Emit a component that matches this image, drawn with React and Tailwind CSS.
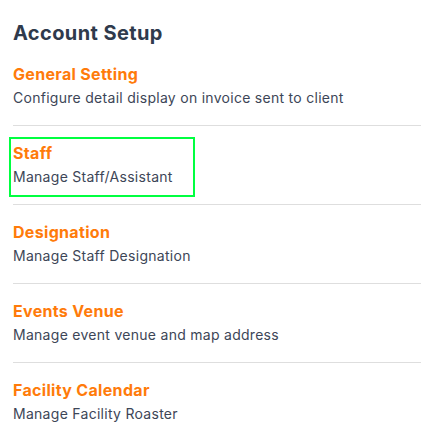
import React from "react";

const items = [
  { title: "General Setting", desc: "Configure detail display on invoice sent to client" },
  { title: "Staff", desc: "Manage Staff/Assistant", active: true },
  { title: "Designation", desc: "Manage Staff Designation" },
  { title: "Events Venue", desc: "Manage event venue and map address" },
  { title: "Facility Calendar", desc: "Manage Facility Roaster" },
];

const App = () => {
  return (
    <div
      className="min-h-screen bg-white px-[13px] pt-[19px]"
      style={{ fontFamily: "Inter, 'Open Sans', sans-serif" }}
    >
      <h1 className="text-[20px] leading-[28px] font-bold tracking-[0.02em] text-[#2f3a4c]">Account Setup</h1>

      <div className="w-[408px]">
        {items.map((item, i) => (
          <div key={item.title} className={`pt-[11px] pb-[7px] ${i > 0 ? "border-t border-[#dedede]" : ""}`}>
            <div
              className={`-mx-1 px-0.5 pt-0.5 pb-2 border-2 ${
                item.active ? "w-[186px] border-[#00ff40]" : "border-transparent"
              }`}
            >
              <div className="text-[16px] leading-[24px] font-bold tracking-[0.02em] text-[#ff7b0a]">{item.title}</div>
              <div className="mt-0.5 text-[14px] leading-[20px] tracking-[0.02em] text-[#3d4657]">{item.desc}</div>
            </div>
          </div>
        ))}
      </div>
    </div>
  );
};

export default App;
